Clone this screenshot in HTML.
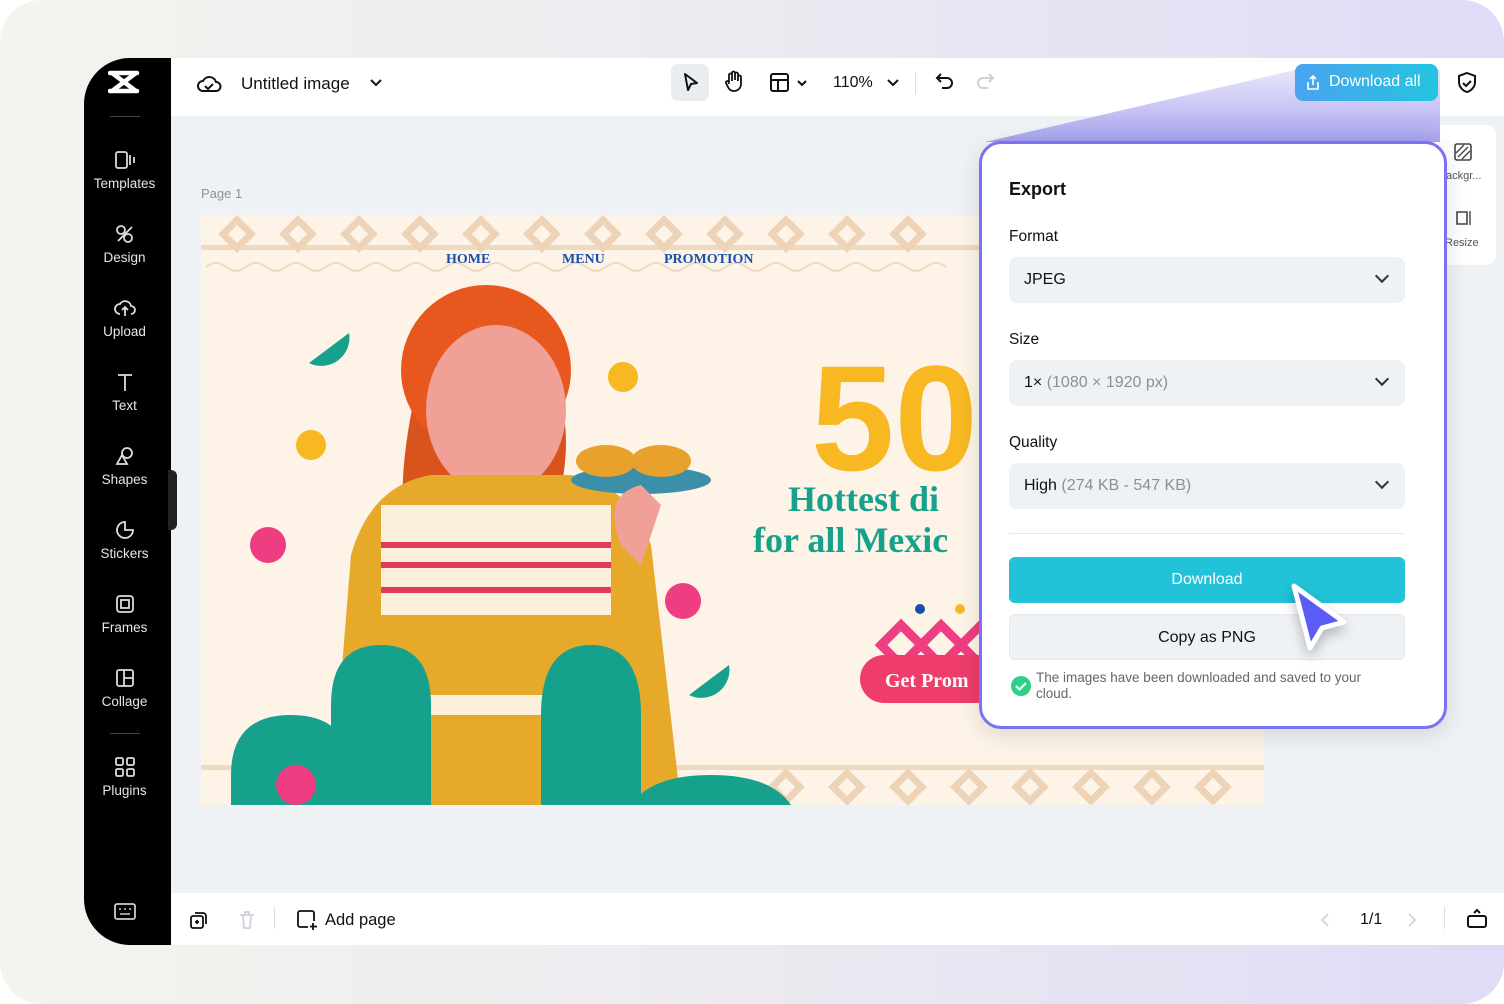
<!DOCTYPE html>
<html><head><meta charset="utf-8"><style>
*{margin:0;padding:0;box-sizing:border-box}
body{width:1504px;height:1004px;overflow:hidden;font-family:"Liberation Sans",sans-serif;background:#fff}
.bg{position:absolute;inset:0;border-radius:42px;background:linear-gradient(90deg,#f3f4ee 0%,#eceaf0 50%,#dedcf6 100%)}
.app{position:absolute;left:84px;top:58px;width:1420px;height:887px;background:#eff2f5;border-radius:46px 0 0 46px;overflow:hidden}
.side{position:absolute;left:0;top:0;width:87px;height:887px;background:#000}
.top{position:absolute;left:87px;top:0;right:0;height:58px;background:#fff}
.bot{position:absolute;left:87px;bottom:0;right:0;height:52px;background:#fff}
.si{position:absolute;left:0;width:81px;text-align:center;color:#e6e6e6;font-size:13.5px}
.si svg{display:block;margin:0 auto 6px}
.abs{position:absolute}
.panel{position:absolute;left:979px;top:141px;width:468px;height:588px;background:#fff;border:3px solid #7a72f2;border-radius:22px;box-shadow:0 6px 24px rgba(0,0,0,.12)}
.lbl{position:absolute;left:27px;font-size:15.5px;color:#111}
.sel{position:absolute;left:27px;width:396px;height:46px;background:#eff2f5;border-radius:8px;font-size:16px;color:#111;padding:14px 15px}
.sel span{color:#8a8f98}
.sel i{position:absolute;right:18px;top:14px;width:10px;height:10px;border-right:2px solid #333;border-bottom:2px solid #333;transform:rotate(45deg)}
</style></head><body>
<div class="bg"></div>
<div class="app">
 <div class="side">
  <svg class="abs" style="left:24px;top:12px" width="32" height="24" viewBox="0 0 32 24"><path d="M2 3h27M2 21h27M4 3l24 18M28 3L4 21" stroke="#fff" stroke-width="4.5" fill="none" stroke-linecap="round"/></svg>
  <div class="abs" style="left:26px;top:58px;width:30px;height:1px;background:#444"></div>
  <div class="si" style="top:92px"><svg width="22" height="20"><rect x="2" y="2" width="11" height="16" rx="2" stroke="#ddd" stroke-width="1.8" fill="none"/><path d="M16 5v10M20 7v6" stroke="#ddd" stroke-width="1.8"/></svg>Templates</div>
  <div class="si" style="top:166px"><svg width="22" height="20"><circle cx="7" cy="6" r="4" stroke="#ddd" stroke-width="1.8" fill="none"/><circle cx="14" cy="14" r="4" stroke="#ddd" stroke-width="1.8" fill="none"/><path d="M4 17L18 3" stroke="#ddd" stroke-width="1.8"/></svg>Design</div>
  <div class="si" style="top:240px"><svg width="22" height="20"><path d="M6 16a5 5 0 010-10 6 6 0 0111 2 4 4 0 010 8M11 9v9M8 12l3-3 3 3" stroke="#ddd" stroke-width="1.8" fill="none"/></svg>Upload</div>
  <div class="si" style="top:314px"><svg width="22" height="20"><path d="M4 3h14M11 3v16" stroke="#ddd" stroke-width="1.8"/></svg>Text</div>
  <div class="si" style="top:388px"><svg width="22" height="20"><circle cx="13" cy="7" r="5" stroke="#ddd" stroke-width="1.8" fill="none"/><path d="M3 18l5-9 5 9z" stroke="#ddd" stroke-width="1.8" fill="none"/></svg>Shapes</div>
  <div class="si" style="top:462px"><svg width="22" height="20"><path d="M11 2a8 8 0 108 8h-8z" stroke="#ddd" stroke-width="1.8" fill="none"/></svg>Stickers</div>
  <div class="si" style="top:536px"><svg width="22" height="20"><rect x="3" y="2" width="16" height="16" rx="3" stroke="#ddd" stroke-width="1.8" fill="none"/><rect x="7" y="6" width="8" height="8" stroke="#ddd" stroke-width="1.8" fill="none"/></svg>Frames</div>
  <div class="si" style="top:610px"><svg width="22" height="20"><rect x="3" y="2" width="16" height="16" rx="2" stroke="#ddd" stroke-width="1.8" fill="none"/><path d="M10 2v16M10 10h9" stroke="#ddd" stroke-width="1.8"/></svg>Collage</div>
  <div class="abs" style="left:26px;top:675px;width:30px;height:1px;background:#444"></div>
  <div class="si" style="top:699px"><svg width="22" height="20"><rect x="2" y="1" width="7" height="7" rx="1.5" stroke="#ddd" stroke-width="1.8" fill="none"/><rect x="13" y="1" width="7" height="7" rx="1.5" stroke="#ddd" stroke-width="1.8" fill="none"/><rect x="2" y="12" width="7" height="7" rx="1.5" stroke="#ddd" stroke-width="1.8" fill="none"/><rect x="13" y="12" width="7" height="7" rx="1.5" stroke="#ddd" stroke-width="1.8" fill="none"/></svg>Plugins</div>
  <svg class="abs" style="left:30px;top:845px" width="22" height="18"><rect x="1" y="1" width="20" height="15" rx="2" stroke="#ccc" stroke-width="1.8" fill="none"/><path d="M5 6h2M10 6h2M15 6h2M6 11h10" stroke="#ccc" stroke-width="1.6"/></svg>
 </div>
 <div class="abs" style="left:84px;top:412px;width:9px;height:60px;background:#222;border-radius:0 6px 6px 0"></div>
 <div class="top">
  <svg class="abs" style="left:25px;top:14px" width="26" height="22"><path d="M7 19a5 5 0 010-10 7 7 0 0113 1 4.5 4.5 0 010 9z" stroke="#111" stroke-width="2" fill="none"/><path d="M9 14l3 3 5-5" stroke="#111" stroke-width="2" fill="none"/></svg>
  <div class="abs" style="left:70px;top:16px;font-size:17px;color:#111">Untitled image</div>
  <svg class="abs" style="left:198px;top:20px" width="14" height="10"><path d="M2 2l5 5 5-5" stroke="#111" stroke-width="2" fill="none"/></svg>
  <div class="abs" style="left:500px;top:6px;width:38px;height:37px;background:#e9edf0;border-radius:7px"></div>
  <svg class="abs" style="left:510px;top:14px" width="20" height="22"><path d="M4 2l12 9-6 1-3 6z" stroke="#111" stroke-width="2" fill="none" stroke-linejoin="round"/></svg>
  <svg class="abs" style="left:552px;top:12px" width="22" height="24"><path d="M6 12V5a1.5 1.5 0 013 0v6M9 10V3a1.5 1.5 0 013 0v7M12 10V4a1.5 1.5 0 013 0v7M15 11V7a1.5 1.5 0 013 0v7a7 7 0 01-7 7 6 6 0 01-6-4l-2-4a1.5 1.5 0 012.5-1.5L6 14" stroke="#111" stroke-width="1.8" fill="none"/></svg>
  <svg class="abs" style="left:598px;top:14px" width="40" height="22"><rect x="2" y="2" width="17" height="17" rx="2" stroke="#111" stroke-width="2" fill="none"/><path d="M2 8h17M9 8v11M29 9l4 4 4-4" stroke="#111" stroke-width="2" fill="none"/></svg>
  <div class="abs" style="left:662px;top:16px;font-size:16px;color:#111">110%</div>
  <svg class="abs" style="left:715px;top:20px" width="14" height="10"><path d="M2 2l5 5 5-5" stroke="#111" stroke-width="2" fill="none"/></svg>
  <div class="abs" style="left:744px;top:14px;width:1px;height:22px;background:#ddd"></div>
  <svg class="abs" style="left:762px;top:13px" width="22" height="22"><path d="M5 7h9a5 5 0 010 10H9M8 3L4 7l4 4" stroke="#111" stroke-width="2" fill="none"/></svg>
  <svg class="abs" style="left:804px;top:13px" width="22" height="22"><path d="M17 7H8a5 5 0 000 10h5M14 3l4 4-4 4" stroke="#cdd2d8" stroke-width="2" fill="none"/></svg>
  <div class="abs" style="left:1124px;top:6px;width:143px;height:37px;border-radius:8px;background:linear-gradient(90deg,#4ba3f0,#24c4e0);color:#fff;font-size:16px;padding:9px 0 0 34px">Download all</div>
  <svg class="abs" style="left:1134px;top:16px" width="16" height="18"><path d="M8 11V2M5 5l3-3 3 3M3 8v7h10V8" stroke="#fff" stroke-width="1.6" fill="none"/></svg>
  <svg class="abs" style="left:1285px;top:13px" width="22" height="24"><path d="M11 2l8 3v6c0 5-4 9-8 10-4-1-8-5-8-10V5z" stroke="#111" stroke-width="2" fill="none"/><path d="M7 12l3 3 5-5" stroke="#111" stroke-width="2" fill="none"/></svg>
 </div>
 <div class="abs" style="left:117px;top:128px;font-size:13px;color:#8a929c">Page 1</div>
 <svg class="abs" style="left:117px;top:157px" width="1063" height="590" viewBox="0 0 1063 590">
  <rect width="1063" height="590" fill="#fdf4e7"/>
  <g fill="#efd9c0">
   <path d="M0 30h1063v5H0z"/>
   <path d="M0 550h1063v5H0z"/>
  </g>
  <g fill="none" stroke="#edd4b8" stroke-width="7">
   <path d="M36 5l14 14-14 14-14-14z M97 5l14 14-14 14-14-14z M158 5l14 14-14 14-14-14z M219 5l14 14-14 14-14-14z M280 5l14 14-14 14-14-14z M341 5l14 14-14 14-14-14z M402 5l14 14-14 14-14-14z M463 5l14 14-14 14-14-14z M524 5l14 14-14 14-14-14z M585 5l14 14-14 14-14-14z M646 5l14 14-14 14-14-14z M707 5l14 14-14 14-14-14z"/>
   <path d="M585 558l14 14-14 14-14-14z M646 558l14 14-14 14-14-14z M707 558l14 14-14 14-14-14z M768 558l14 14-14 14-14-14z M829 558l14 14-14 14-14-14z M890 558l14 14-14 14-14-14z M951 558l14 14-14 14-14-14z M1012 558l14 14-14 14-14-14z"/>
  </g>
  <path d="M5 52q10-8 20 0t20 0 20 0 20 0 20 0 20 0 20 0 20 0 20 0 20 0 20 0 20 0 20 0 20 0 20 0 20 0 20 0 20 0 20 0 20 0 20 0 20 0 20 0 20 0 20 0 20 0 20 0 20 0 20 0 20 0 20 0 20 0 20 0 20 0 20 0 20 0 20 0" stroke="#efd9c0" stroke-width="2" fill="none"/>
  <g font-family="Liberation Serif" font-weight="bold" font-size="14" fill="#1a4fa8"><text x="245" y="48">HOME</text><text x="361" y="48">MENU</text><text x="463" y="48">PROMOTION</text></g>
  <path d="M215 175q-20 90-10 140l40 20 20-140z" fill="#d9541c"/>
  <path d="M350 160q30 60 0 150l-20-10 10-130z" fill="#d9541c"/>
  <ellipse cx="285" cy="155" rx="85" ry="85" fill="#e8571d"/>
  <ellipse cx="295" cy="195" rx="70" ry="85" fill="#f0a096"/>
  <path d="M255 290h90l15 40h-120z" fill="#f0a096"/>
  <path d="M130 590l20-250q20-70 80-80h140q60 10 80 70l30 260z" fill="#e7a92a"/>
  <rect x="180" y="290" width="230" height="110" fill="#faf0dc"/>
  <path d="M180 330h230M180 350h230M180 375h230" stroke="#e23b5a" stroke-width="6"/>
  <rect x="210" y="480" width="160" height="20" fill="#faf0dc"/>
  <path d="M30 560q0-60 60-60t60 60v30H30z M130 590v-100q0-60 50-60t50 60v100z" fill="#16a18d"/>
  <path d="M340 590v-90q0-70 50-70t50 70v90z M430 590q20-30 80-30t80 30z" fill="#16a18d"/>
  <ellipse cx="440" cy="265" rx="70" ry="14" fill="#3c8fa8"/>
  <ellipse cx="405" cy="246" rx="30" ry="16" fill="#e8a12a"/><ellipse cx="460" cy="246" rx="30" ry="16" fill="#e8a12a"/>
  <path d="M420 330q-20-50 20-60l20 20-20 60z" fill="#f0a096"/>
  <circle cx="110" cy="230" r="15" fill="#f7b822"/><circle cx="422" cy="162" r="15" fill="#f7b822"/>
  <circle cx="67" cy="330" r="18" fill="#ef3d82"/><circle cx="482" cy="386" r="18" fill="#ef3d82"/><circle cx="95" cy="570" r="20" fill="#ef3d82"/>
  <path d="M108 148a28 28 0 0040-30z M488 480a28 28 0 0040-30z" fill="#16a18d"/>
  <text x="610" y="255" font-family="Liberation Sans" font-weight="bold" font-size="150" fill="#f7b822">50</text>
  <g font-family="Liberation Serif" font-weight="bold" font-size="36" fill="#16a18d"><text x="587" y="296">Hottest di</text><text x="552" y="337">for all Mexic</text></g>
  <path d="M680 430l20-20 20 20-20 20z M720 430l20-20 20 20-20 20z M760 430l20-20 20 20-20 20z" fill="none" stroke="#ef3d82" stroke-width="9"/>
  <circle cx="719" cy="394" r="5" fill="#1a4fa8"/><circle cx="759" cy="394" r="5" fill="#f7b822"/>
  <rect x="659" y="440" width="160" height="48" rx="24" fill="#ef3d6a"/>
  <text x="684" y="472" font-family="Liberation Serif" font-weight="bold" font-size="20" fill="#fff">Get Prom</text>
 </svg>
 <div class="abs" style="left:1346px;top:67px;width:66px;height:140px;background:#fff;border-radius:10px;font-size:11px;color:#555;overflow:hidden">
  <svg class="abs" style="left:23px;top:17px" width="20" height="20"><rect x="2" y="2" width="16" height="16" rx="2" stroke="#444" stroke-width="1.6" fill="none"/><path d="M5 15l10-10M9 17l8-8M3 11l8-8" stroke="#444" stroke-width="1.4"/></svg>
  <div class="abs" style="left:16px;top:45px">ackgr...</div>
  <svg class="abs" style="left:23px;top:83px" width="20" height="20"><path d="M4 4h10v12H4z" stroke="#444" stroke-width="1.6" fill="none"/><path d="M17 3v14" stroke="#444" stroke-width="1.4"/></svg>
  <div class="abs" style="left:15px;top:112px">Resize</div>
 </div>
 <div class="bot">
  <svg class="abs" style="left:18px;top:17px" width="20" height="20"><rect x="2" y="6" width="12" height="12" rx="2" stroke="#111" stroke-width="1.8" fill="none"/><path d="M6 3h8a3 3 0 013 3v8M8 10v4M6 12h4" stroke="#111" stroke-width="1.8" fill="none"/></svg>
  <svg class="abs" style="left:66px;top:17px" width="20" height="20"><path d="M3 5h14M6 5l1 13h6l1-13M8 5V2h4v3" stroke="#cdd2d8" stroke-width="1.8" fill="none"/></svg>
  <div class="abs" style="left:103px;top:14px;width:1px;height:22px;background:#ddd"></div>
  <svg class="abs" style="left:125px;top:16px" width="22" height="22"><path d="M12 18H4a2 2 0 01-2-2V4a2 2 0 012-2h12a2 2 0 012 2v8M17 14v7M14 17.5h7" stroke="#111" stroke-width="1.8" fill="none"/></svg>
  <div class="abs" style="left:154px;top:18px;font-size:16.5px;color:#111">Add page</div>
  <svg class="abs" style="left:1148px;top:19px" width="12" height="16"><path d="M9 2L3 8l6 6" stroke="#cdd2d8" stroke-width="1.6" fill="none"/></svg>
  <div class="abs" style="left:1189px;top:18px;font-size:16px;color:#111">1/1</div>
  <svg class="abs" style="left:1235px;top:19px" width="12" height="16"><path d="M3 2l6 6-6 6" stroke="#cdd2d8" stroke-width="1.6" fill="none"/></svg>
  <div class="abs" style="left:1273px;top:14px;width:1px;height:22px;background:#ddd"></div>
  <svg class="abs" style="left:1295px;top:14px" width="22" height="22"><rect x="2" y="9" width="18" height="11" rx="2" stroke="#111" stroke-width="2" fill="none"/><path d="M8 6l3-3 3 3" stroke="#111" stroke-width="2" fill="none"/></svg>
 </div>
</div>
<svg class="abs" style="left:0;top:0" width="1504" height="1004"><defs><linearGradient id="bm" x1="0" y1="0" x2="0" y2="1"><stop offset="0" stop-color="#dcdaf8" stop-opacity=".7"/><stop offset="1" stop-color="#9e98ec" stop-opacity=".9"/></linearGradient></defs><polygon points="985,142 1295,70 1440,70 1440,142" fill="url(#bm)"/></svg>
<div class="abs" style="left:1295px;top:64px;width:143px;height:37px;border-radius:8px;background:linear-gradient(90deg,#4ba3f0,#24c4e0);color:#fff;font-size:16px;padding:9px 0 0 34px">Download all</div>
<svg class="abs" style="left:1305px;top:74px" width="16" height="18"><path d="M8 11V2M5 5l3-3 3 3M3 8v7h10V8" stroke="#fff" stroke-width="1.6" fill="none"/></svg>
<div class="panel">
 <div class="abs" style="left:27px;top:35px;font-size:18px;font-weight:bold;color:#111">Export</div>
 <div class="lbl" style="top:84px">Format</div>
 <div class="sel" style="top:113px">JPEG<i></i></div>
 <div class="lbl" style="top:187px">Size</div>
 <div class="sel" style="top:216px">1× <span>(1080 × 1920 px)</span><i></i></div>
 <div class="lbl" style="top:290px">Quality</div>
 <div class="sel" style="top:319px">High <span>(274 KB - 547 KB)</span><i></i></div>
 <div class="abs" style="left:27px;top:389px;width:396px;height:1px;background:#e6e8eb"></div>
 <div class="abs" style="left:27px;top:413px;width:396px;height:46px;background:#22c3d8;border-radius:6px;color:#fff;font-size:16px;text-align:center;line-height:46px">Download</div>
 <div class="abs" style="left:27px;top:470px;width:396px;height:46px;background:#eff2f5;border-radius:6px;color:#111;font-size:16px;text-align:center;line-height:46px;border:1px solid #e5e8ec">Copy as PNG</div>
 <svg class="abs" style="left:28px;top:531px" width="22" height="22"><circle cx="11" cy="11" r="10" fill="#2ecf88"/><path d="M6 11l3.5 3.5L16 8" stroke="#fff" stroke-width="2.2" fill="none"/></svg>
 <div class="abs" style="left:54px;top:526px;width:355px;font-size:13.5px;line-height:16px;color:#666">The images have been downloaded and saved to your cloud.</div>
</div>
<svg class="abs" style="left:1282px;top:576px;filter:drop-shadow(0 6px 6px rgba(0,0,0,.25))" width="74" height="80"><path d="M12 10l50 36-22 6-12 20z" fill="#5b5cf6" stroke="#fff" stroke-width="5" stroke-linejoin="round"/></svg>
</body></html>
